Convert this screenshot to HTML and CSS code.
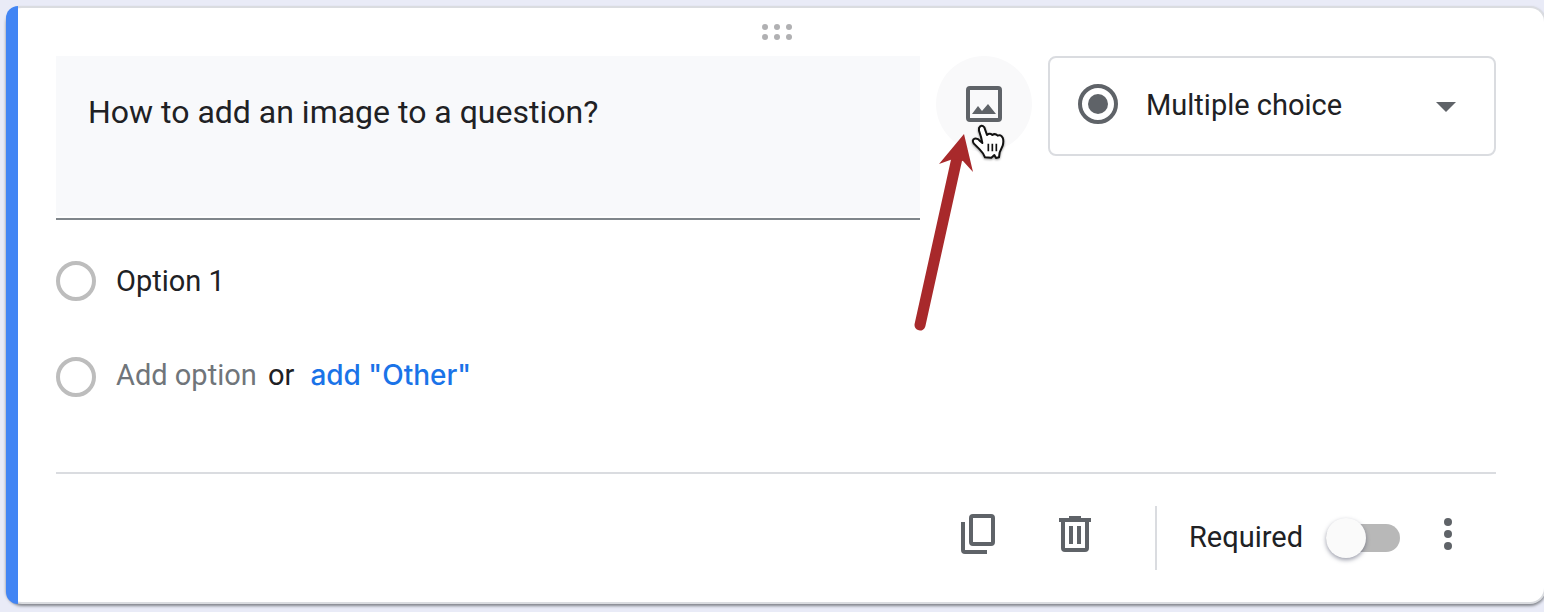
FILE: index.html
```html
<!DOCTYPE html>
<html lang="en">
<head>
    <meta charset="UTF-8">
    <meta name="viewport" content="width=device-width, initial-scale=1.0">
    <title>Question editor</title>
    <link rel="stylesheet" href="styles.css">
</head>
<body>
    <form class="card">
        <div class="drag">
            <svg width="32" height="16" viewBox="0 0 32 16" fill="#b0b0b2">
                <circle cx="5" cy="3" r="3"/><circle cx="17" cy="3" r="3"/><circle cx="29" cy="3" r="3"/>
                <circle cx="5" cy="13" r="3"/><circle cx="17" cy="13" r="3"/><circle cx="29" cy="13" r="3"/>
            </svg>
        </div>

        <div class="top">
            <div class="question">
                <textarea aria-label="Question">How to add an image to a question?</textarea>
            </div>

            <div class="image-wrap">
                <button type="button" class="image-btn" aria-label="Add image">
                    <svg width="36" height="36" viewBox="0 0 36 36">
                        <rect x="2" y="2" width="32" height="32" rx="2" fill="none" stroke="#5f6368" stroke-width="4"/>
                        <path d="M6 28L12 20L16 25L22 18L30 28Z" fill="#5f6368"/>
                    </svg>
                </button>
                <svg class="arrow" width="80" height="210" viewBox="0 0 80 210">
                    <path d="M51 28L14 195" stroke="#a8292b" stroke-width="11" stroke-linecap="round"/>
                    <path d="M58 4L33 34L47 29L57 31L67 42Z" fill="#a8292b"/>
                </svg>
                <svg class="hand" width="36" height="40" viewBox="690 366 108 120">
                    <path d="M717 384Q724 371 733 382L741 405Q749 398 757 405Q765 399 773 407Q782 402 788 413Q792 422 788 437L779 457L777 472L768 474L763 465L754 473L735 472Q730 459 719 448L701 430Q695 420 704 416Q713 414 721 424L727 429Q724 411 717 392Z" fill="#fff" stroke="#111" stroke-width="6" stroke-linejoin="round"/>
                    <path d="M745 431V454M757 431V454M769 431V454" stroke="#111" stroke-width="5"/>
                </svg>
            </div>

            <div class="type">
                <svg class="type-icon" width="40" height="40" viewBox="0 0 40 40">
                    <circle cx="20" cy="20" r="18" fill="none" stroke="#5f6368" stroke-width="4"/>
                    <circle cx="20" cy="20" r="10" fill="#5f6368"/>
                </svg>
                <select aria-label="Question type">
                    <option>Multiple choice</option>
                    <option>Checkboxes</option>
                    <option>Drop-down</option>
                </select>
                <svg class="type-caret" width="20" height="10" viewBox="0 0 20 10">
                    <path d="M0 0H20L10 10Z" fill="#5f6368"/>
                </svg>
            </div>
        </div>

        <div class="options">
            <div class="option">
                <input type="radio" name="answer" aria-label="Option 1">
                <input type="text" class="option-text" value="Option 1" aria-label="Option text">
            </div>
            <div class="option">
                <input type="radio" name="answer" aria-label="New option">
                <div class="add-row">
                    <input type="text" class="add-option" placeholder="Add option" aria-label="Add option">
                    <span class="or">or</span>
                    <button type="button" class="add-other">add "Other"</button>
                </div>
            </div>
        </div>

        <div class="footer">
            <button type="button" class="icon-btn" aria-label="Duplicate">
                <svg width="48" height="48" viewBox="0 0 48 48" fill="none" stroke="#5f6368" stroke-width="4">
                    <rect x="16" y="2" width="22" height="28" rx="2"/>
                    <path d="M8 8V36Q8 38 10 38H32"/>
                </svg>
            </button>
            <button type="button" class="icon-btn" aria-label="Delete">
                <svg width="48" height="48" viewBox="0 0 48 48" fill="none" stroke="#5f6368" stroke-width="4">
                    <path d="M8 6H40M18 4H30M12 6V34Q12 36 14 36H34Q36 36 36 34V6M20 12V30M28 12V30"/>
                </svg>
            </button>
            <div class="line"></div>
            <label for="required">Required</label>
            <input type="checkbox" id="required" class="toggle">
            <button type="button" class="icon-btn" aria-label="More options">
                <svg width="48" height="48" viewBox="0 0 48 48" fill="#5f6368">
                    <circle cx="24" cy="8" r="4"/><circle cx="24" cy="20" r="4"/><circle cx="24" cy="32" r="4"/>
                </svg>
            </button>
        </div>
    </form>
</body>
</html>
```

FILE: styles.css
```css
* {
    box-sizing: border-box;
}

body {
    margin: 0;
    padding: 6px 0 8px 6px;
    background: #e9ebf7;
    color: #202124;
    font-family: Roboto, "Liberation Sans", sans-serif;
    font-size: 29px;
    overflow-x: hidden;
}

input, select, textarea, button {
    margin: 0;
    padding: 0;
    border: 0;
    background: none;
    color: inherit;
    font: inherit;
    outline: none;
}

svg {
    display: block;
}

/* the right border runs past the window edge */
.card {
    position: relative;
    margin-right: -2px;
    padding: 0 48px 0 50px;
    background: #fff;
    border: 2px solid #dadce0;
    border-left: 0;
    border-radius: 16px;
    box-shadow: 0 2px 3px rgba(60, 64, 67, 0.6);
}

.card::before {
    content: "";
    position: absolute;
    left: 0;
    top: -2px;
    bottom: -2px;
    width: 12px;
    background: #4285f4;
    border-radius: 12px 0 0 12px;
}

.drag {
    display: flex;
    justify-content: center;
    height: 48px;
    padding-top: 16px;
}

.top {
    display: grid;
    grid-template-columns: 1fr 96px 448px;
    gap: 16px;
    align-items: start;
}

.question {
    padding-bottom: 2px;
    border-bottom: 2px solid #80868b;
}

.question textarea {
    display: block;
    width: 100%;
    height: 160px;
    padding: 36px 32px;
    background: #f8f9fb;
    font-size: 32px;
    line-height: 40px;
    resize: none;
}

.image-wrap {
    position: relative;
}

.image-btn {
    display: flex;
    align-items: center;
    justify-content: center;
    width: 96px;
    height: 96px;
    border-radius: 50%;
    background: #f9f9fa;
}

.arrow {
    position: absolute;
    left: -30px;
    top: 74px;
}

.hand {
    position: absolute;
    left: 34px;
    top: 66px;
    filter: drop-shadow(0 1px 1px rgba(0, 0, 0, 0.4));
}

.type {
    position: relative;
}

.type select {
    display: block;
    width: 100%;
    height: 100px;
    padding: 0 60px 2px 96px;
    border: 2px solid #dadce0;
    border-radius: 8px;
    appearance: none;
}

.type-icon {
    position: absolute;
    left: 30px;
    top: 28px;
}

.type-caret {
    position: absolute;
    right: 40px;
    top: 46px;
    pointer-events: none;
}

.options {
    padding: 13px 0 47px;
}

.option {
    display: flex;
    align-items: center;
    height: 96px;
}

.option input[type="radio"] {
    width: 40px;
    height: 40px;
    margin-right: 20px;
    border: 4px solid #bdbdbd;
    border-radius: 50%;
    appearance: none;
}

.option-text {
    flex: 1;
}

.add-row {
    display: flex;
    align-items: baseline;
    padding-bottom: 4px;
}

.add-option {
    width: 152px;
}

.add-option::placeholder {
    color: #70757a;
    opacity: 1;
}

.add-other {
    margin-left: 16px;
    color: #1a73e8;
    font-family: Inter, "Open Sans", sans-serif;
    font-size: 28px;
    font-weight: 500;
}

.footer {
    display: flex;
    align-items: center;
    justify-content: flex-end;
    height: 130px;
    border-top: 2px solid #dadce0;
}

.footer label {
    padding-bottom: 2px;
}

.icon-btn {
    display: flex;
    align-items: center;
    justify-content: center;
    width: 96px;
    height: 96px;
}

.line {
    width: 2px;
    height: 64px;
    margin: 0 32px;
    background: #dadce0;
}

.toggle {
    position: relative;
    width: 74px;
    height: 28px;
    margin-left: 23px;
    border-radius: 14px;
    background: #b8b8b8;
    appearance: none;
}

.toggle::before {
    content: "";
    position: absolute;
    left: 0;
    top: -6px;
    width: 40px;
    height: 40px;
    border-radius: 50%;
    background: #fafafa;
    box-shadow: 0 2px 4px rgba(60, 64, 90, 0.5);
}

.toggle:checked::before {
    left: 34px;
}
```
